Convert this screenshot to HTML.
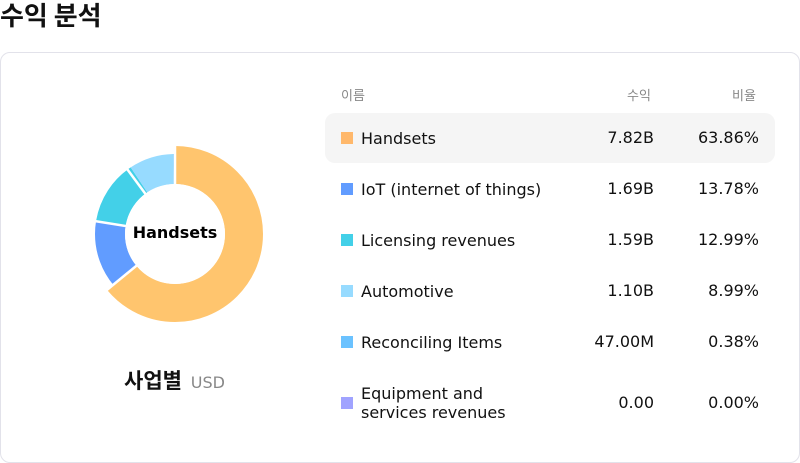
<!DOCTYPE html>
<html><head><meta charset="utf-8"><style>
body{margin:0;width:800px;height:463px;background:#fff;font-family:"DejaVu Sans","Liberation Sans","Noto Sans CJK KR",sans-serif;overflow:hidden;position:relative;color:#111}
h1{position:absolute;left:0;top:0;margin:0;font-size:26px;font-weight:bold;line-height:30px;font-family:"Noto Sans CJK KR",sans-serif}
.card{position:absolute;left:0;top:52px;width:798px;height:409px;border:1px solid #e2e2ea;border-radius:10px}
.row{position:absolute;left:325px;width:450px;height:50px;font-size:16px}
.row.sel{background:#f5f5f5;border-radius:10px}
.sw{position:absolute;left:16px;width:12px;height:12px;top:19px}
.nm{position:absolute;left:36px;top:0;height:50px;display:flex;align-items:center;line-height:19px}
.v{position:absolute;right:121px;top:15px}
.p{position:absolute;right:16px;top:15px}
.hd{position:absolute;top:85px;font-size:13px;color:#888;font-family:"Noto Sans CJK KR",sans-serif}
</style></head><body>
<h1>수익 분석</h1>
<div class="card"></div>
<svg style="position:absolute;left:0;top:0" width="360" height="463">
<g transform="rotate(-90 175 234)" fill="none">
<circle cx="175" cy="234" r="69" stroke-width="38" stroke="#FFC56E" stroke-dasharray="276.9 434" stroke-dashoffset="0"/>
<circle cx="175" cy="234" r="65" stroke-width="30" stroke="#619CFF" stroke-dasharray="56.3 409" stroke-dashoffset="-260.8"/>
<circle cx="175" cy="234" r="65" stroke-width="30" stroke="#43D0E8" stroke-dasharray="53 409" stroke-dashoffset="-317.1"/>
<circle cx="175" cy="234" r="65" stroke-width="30" stroke="#97DBFF" stroke-dasharray="36.7 409" stroke-dashoffset="-370.1"/>
<circle cx="175" cy="234" r="65" stroke-width="30" stroke="#6BC2FF" stroke-dasharray="1.6 409" stroke-dashoffset="-406.8"/>
</g>
<g stroke="#fff" stroke-width="2.5">
<line x1="175" y1="234" x2="175" y2="140"/>
<line x1="175" y1="234" x2="102" y2="294"/>
<line x1="175" y1="234" x2="82" y2="219"/>
<line x1="175" y1="234" x2="119" y2="158"/>
</g>
<circle cx="175" cy="234" r="50" fill="#fff"/>
<text x="175" y="238" text-anchor="middle" font-size="16" font-weight="bold" font-family="DejaVu Sans">Handsets</text>
</svg>
<div style="position:absolute;left:124px;top:365px;font-size:21px;font-weight:bold;font-family:'Noto Sans CJK KR',sans-serif">사업별 <span style="font-size:16px;font-weight:normal;color:#888;font-family:'DejaVu Sans',sans-serif;margin-left:4px">USD</span></div>
<div class="hd" style="left:341px">이름</div>
<div class="hd" style="left:627px">수익</div>
<div class="hd" style="left:732px">비율</div>
<div class="row sel" style="top:113px"><div class="sw" style="background:#FFB86B"></div><div class="nm">Handsets</div><div class="v">7.82B</div><div class="p">63.86%</div></div>
<div class="row" style="top:164px"><div class="sw" style="background:#619CFF"></div><div class="nm">IoT (internet of things)</div><div class="v">1.69B</div><div class="p">13.78%</div></div>
<div class="row" style="top:215px"><div class="sw" style="background:#43D0E8"></div><div class="nm">Licensing revenues</div><div class="v">1.59B</div><div class="p">12.99%</div></div>
<div class="row" style="top:266px"><div class="sw" style="background:#97DBFF"></div><div class="nm">Automotive</div><div class="v">1.10B</div><div class="p">8.99%</div></div>
<div class="row" style="top:317px"><div class="sw" style="background:#6BC2FF"></div><div class="nm">Reconciling Items</div><div class="v">47.00M</div><div class="p">0.38%</div></div>
<div class="row" style="top:378px"><div class="sw" style="background:#A0A3FF"></div><div class="nm">Equipment and<br>services revenues</div><div class="v">0.00</div><div class="p">0.00%</div></div>
</body></html>
